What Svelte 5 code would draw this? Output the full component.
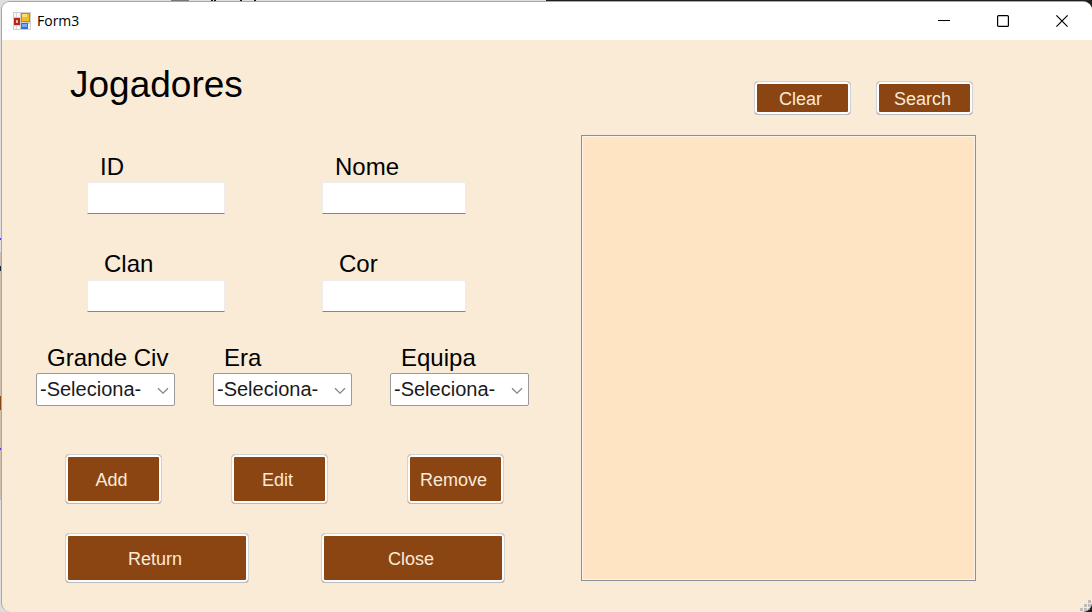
<script>
  const choices = ['-Seleciona-'];
  const filters = [
    { id: 'civ', label: 'Grande Civ' },
    { id: 'era', label: 'Era' },
    { id: 'equipa', label: 'Equipa' }
  ];
  let player = $state({ id: '', nome: '', clan: '', cor: '' });
</script>

<div class="desktop">
  <div class="window">
    <header class="titlebar">
      <svg class="app-icon" width="18" height="18" viewBox="0 0 18 18" aria-hidden="true">
        <rect width="18" height="18" fill="#cfcfcf" />
        <path d="M1 1h6v4H1zM1 14h6v3H1zM15 12h2v5h-2z" fill="#f7f7f7" />
        <path d="M3 1h1v4H3zM3 14h1v3H3z" fill="#d8d8d8" />
        <rect x="1" y="6" width="6" height="7" fill="#b3261e" />
        <rect x="3" y="8" width="2" height="3" fill="#f0b0a8" />
        <rect x="8" y="1" width="9" height="9" fill="#c98b00" />
        <rect x="9" y="2" width="7" height="7" fill="#f5bd24" />
        <rect x="9" y="2" width="5" height="3" fill="#ffdc72" />
        <rect x="8" y="11" width="7" height="6" fill="#2f6fd6" />
        <rect x="9" y="12" width="5" height="3" fill="#79abf5" />
      </svg>
      <span class="title">Form3</span>
      <div class="controls">
        <button aria-label="Minimize">
          <svg width="12" height="12" viewBox="0 0 12 12"><path d="M0 5.5h12" /></svg>
        </button>
        <button aria-label="Maximize">
          <svg width="12" height="12" viewBox="0 0 12 12"><rect x="0.6" y="0.6" width="10.8" height="10.8" rx="1" /></svg>
        </button>
        <button aria-label="Close window">
          <svg width="12" height="12" viewBox="0 0 12 12"><path d="M0.4 0.4l11.2 11.2M11.6 0.4L0.4 11.6" /></svg>
        </button>
      </div>
    </header>

    <main>
      <form onsubmit={(e) => e.preventDefault()}>
        <h1>Jogadores</h1>

        <div class="fields">
          <div class="field">
            <label for="id">ID</label>
            <input id="id" type="text" bind:value={player.id} />
          </div>
          <div class="field">
            <label for="nome">Nome</label>
            <input id="nome" type="text" bind:value={player.nome} />
          </div>
        </div>

        <div class="fields second">
          <div class="field">
            <label for="clan">Clan</label>
            <input id="clan" type="text" bind:value={player.clan} />
          </div>
          <div class="field">
            <label for="cor">Cor</label>
            <input id="cor" type="text" bind:value={player.cor} />
          </div>
        </div>

        <div class="filters">
          {#each filters as filter}
            <div class="field">
              <label for={filter.id}>{filter.label}</label>
              <div class="combo">
                <select id={filter.id}>
                  {#each choices as choice}
                    <option>{choice}</option>
                  {/each}
                </select>
                <svg width="12" height="8" viewBox="0 0 12 8" aria-hidden="true"><path d="M1 1.2l5 5 5-5" /></svg>
              </div>
            </div>
          {/each}
        </div>

        <div class="actions">
          <button class="btn tall">Add</button>
          <button class="btn tall">Edit</button>
          <button class="btn tall">Remove</button>
        </div>
        <div class="exits">
          <button class="btn tall">Return</button>
          <button class="btn tall">Close</button>
        </div>
      </form>

      <section class="results">
        <div class="tools">
          <button class="btn">Clear</button>
          <button class="btn">Search</button>
        </div>
        <div class="list" role="listbox" aria-label="Jogadores" tabindex="0"></div>
      </section>
    </main>

    <svg class="grip" width="11" height="11" viewBox="0 0 11 11" aria-hidden="true">
      <path d="M8 0h3v3H8zM4 4h3v3H4zM8 4h3v3H8zM0 8h3v3H0zM4 8h3v3H4zM8 8h3v3H8z" />
    </svg>
  </div>
</div>

<style>
  :global(body) {
    margin: 0;
    font-family: "Liberation Sans", Arial, sans-serif;
    color: #000;
  }

  .desktop {
    box-sizing: border-box;
    min-height: 100vh;
    padding: 1px 0 0 1px;
    display: flex;
    background:
      linear-gradient(#6a2be8, #6a2be8) 0 238px / 2px 2px no-repeat,
      linear-gradient(#1c2340, #1c2340) 0 266px / 2px 5px no-repeat,
      linear-gradient(#8b4513, #8b4513) 0 396px / 2px 14px no-repeat,
      linear-gradient(#6a2be8, #6a2be8) 0 448px / 2px 2px no-repeat,
      linear-gradient(#cbbfb0, #cbbfb0) 0 252px / 2px 248px no-repeat,
      linear-gradient(90deg, #777 0 18px, transparent 18px 40px, #111 40px 42px, transparent 42px 43px, #111 43px 45px, transparent 45px 69px, #111 69px 71px, transparent 71px 83px, #111 83px 85px, transparent 85px) 171px 0 / 90px 1px no-repeat,
      linear-gradient(90deg, #dedede 50%, #211e1e 50%);
  }

  .window {
    position: relative;
    flex: 1;
    display: flex;
    flex-direction: column;
    overflow: hidden;
    border: 1px solid #a8a8a8;
    border-width: 1px 0 0 1px;
    border-radius: 9px;
    background: #faebd7;
  }

  .titlebar {
    display: flex;
    align-items: center;
    height: 38px;
    padding-left: 11px;
    background: #fff;
  }

  .title {
    margin-left: 6px;
    font: 14px/20px "Open Sans", "Noto Sans", sans-serif;
  }

  .controls {
    display: flex;
    align-self: stretch;
    margin: 0 1px 0 auto;
  }

  .controls button {
    display: flex;
    align-items: center;
    justify-content: center;
    width: 59px;
    padding: 0;
    border: 0;
    background: none;
  }

  .controls svg {
    fill: none;
    stroke: #000;
    stroke-width: 1.2;
  }

  main {
    display: flex;
    flex: 1;
  }

  form {
    flex: 0 0 579px;
  }

  h1 {
    margin: 23px 0 46px 68px;
    font-size: 37px;
    line-height: 44px;
    font-weight: 400;
  }

  .fields,
  .filters,
  .actions,
  .exits {
    display: grid;
  }

  .fields {
    grid-template-columns: 138px 144px;
    column-gap: 97px;
    margin-left: 85px;
  }

  .fields.second {
    margin-top: 36px;
  }

  .field {
    display: flex;
    flex-direction: column;
    gap: 1px;
  }

  .second .field {
    gap: 2px;
  }

  label {
    padding-left: 13px;
    font-size: 24px;
    line-height: 28px;
    white-space: nowrap;
  }

  .second label {
    padding-left: 17px;
  }

  .filters label {
    padding-left: 11px;
  }

  input {
    box-sizing: border-box;
    width: 100%;
    height: 32px;
    padding: 0 4px;
    border: 1px solid #ececec;
    border-bottom-color: #868686;
    border-radius: 1px;
    background: #fff;
    font: 20px/28px "Liberation Sans", Arial, sans-serif;
  }

  .filters {
    grid-template-columns: repeat(3, 139px);
    column-gap: 38px;
    margin: 32px 0 0 34px;
  }

  .combo {
    position: relative;
  }

  select {
    box-sizing: border-box;
    display: block;
    width: 100%;
    height: 33px;
    padding: 0 24px 2px 3px;
    border: 1px solid #9a9a9a;
    border-radius: 2px;
    background: #fff;
    color: #1a1a1a;
    font: 20px/28px "Liberation Sans", Arial, sans-serif;
    appearance: none;
  }

  .combo svg {
    position: absolute;
    top: 14px;
    right: 6px;
    fill: none;
    stroke: #858585;
    stroke-width: 1.3;
    pointer-events: none;
  }

  .actions {
    grid-template-columns: 166px 176px 97px;
    margin: 48px 0 0 63px;
  }

  .actions .btn {
    width: 97px;
  }

  .exits {
    grid-template-columns: 184px 184px;
    column-gap: 72px;
    margin: 29px 0 0 63px;
  }

  .btn {
    height: 34px;
    padding: 2px 4px 0 0;
    border: 1px solid #d2d2d2;
    border-bottom-color: #bcbcbc;
    border-radius: 4px;
    background: #8b4513;
    box-shadow: inset 0 0 0 2px #fdfdfd;
    color: #faebd7;
    font: 18px/20px "Liberation Sans", Arial, sans-serif;
  }

  .btn.tall {
    height: 50px;
  }

  .results {
    flex: 1;
    display: flex;
    flex-direction: column;
    margin: 41px 116px 31px 0;
  }

  .tools {
    display: flex;
    justify-content: flex-end;
    gap: 25px;
    padding-right: 3px;
    margin-bottom: 20px;
  }

  .tools .btn {
    width: 97px;
  }

  .list {
    flex: 1;
    border: 1px solid #8a8f98;
    background: #ffe4c4;
    box-shadow: inset 0 0 0 1px #fbf3ea;
  }

  .grip {
    position: absolute;
    right: 1px;
    bottom: 1px;
    fill: #bfbcb8;
  }
</style>
